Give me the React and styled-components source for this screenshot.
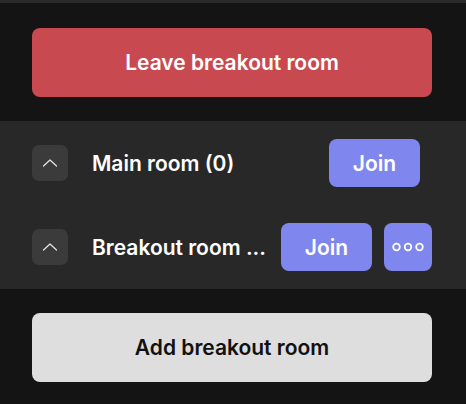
import React from 'react';
import styled, { createGlobalStyle } from 'styled-components';

const GlobalStyle = createGlobalStyle`
  html, body {
    margin: 0;
    padding: 0;
    background: #141414;
    font-family: Inter, "Noto Sans", sans-serif;
  }
`;

const Panel = styled.div`
  width: 466px;
  height: 404px;
  background: #141414;
  border-top: 3px solid #2b2b2b;
  box-sizing: border-box;
  display: flex;
  flex-direction: column;
`;

const Section = styled.div`
  padding: ${(props) => props.pad};
  display: flex;
  flex-direction: column;
`;

const WideButton = styled.button`
  width: 400px;
  height: 69px;
  border: none;
  border-radius: 8px;
  background: ${(props) => (props.variant === 'danger' ? '#c84a50' : '#dedede')};
  color: ${(props) => (props.variant === 'danger' ? '#ffffff' : '#111111')};
  font-family: inherit;
  font-size: 21px;
  font-weight: 600;
  cursor: pointer;
`;

const RoomList = styled.div`
  background: #282828;
  display: flex;
  flex-direction: column;
`;

const Row = styled.div`
  height: 84px;
  display: flex;
  align-items: center;
  padding: 0 34px 0 32px;
`;

const Toggle = styled.button`
  width: 36px;
  height: 36px;
  flex: none;
  border: none;
  border-radius: 7px;
  background: #3b3b3b;
  display: flex;
  align-items: center;
  justify-content: center;
  padding: 0;
  margin-right: 24px;
`;

const Name = styled.div`
  flex: 1;
  min-width: 0;
  color: #ffffff;
  font-size: 21px;
  font-weight: 600;
  white-space: nowrap;
  padding-right: 12px;
`;

const Actions = styled.div`
  display: flex;
  gap: 12px;
  flex: none;
  margin-right: ${(props) => props.inset || 0}px;
`;

const ActionButton = styled.button`
  height: 48px;
  width: ${(props) => (props.square ? '48px' : '91px')};
  border: none;
  border-radius: 8px;
  background: #7f86ee;
  color: #ffffff;
  font-family: inherit;
  font-size: 21px;
  font-weight: 600;
  display: flex;
  align-items: center;
  justify-content: center;
  padding: 0;
`;

const Chevron = () => (
  <svg width="16" height="10" viewBox="0 0 16 10" fill="none">
    <path d="M1.5 8 L8 2 L14.5 8" stroke="#e6e6e6" strokeWidth="1.2" strokeLinecap="round" strokeLinejoin="round" />
  </svg>
);

const MoreIcon = () => (
  <svg width="32" height="10" viewBox="0 0 32 10" fill="none">
    <circle cx="4.5" cy="5" r="3.3" stroke="#fff" strokeWidth="1.8" />
    <circle cx="16" cy="5" r="3.3" stroke="#fff" strokeWidth="1.8" />
    <circle cx="27.5" cy="5" r="3.3" stroke="#fff" strokeWidth="1.8" />
  </svg>
);

const rooms = [
  { name: 'Main room (0)', more: false },
  { name: 'Breakout room ...', more: true },
];

export default function App() {
  return (
    <>
      <GlobalStyle />
      <Panel>
        <Section pad="25px 34px 24px 32px">
          <WideButton variant="danger">Leave breakout room</WideButton>
        </Section>
        <RoomList>
          {rooms.map((room) => (
            <Row key={room.name}>
              <Toggle>
                <Chevron />
              </Toggle>
              <Name>{room.name}</Name>
              <Actions inset={room.more ? 0 : 12}>
                <ActionButton>Join</ActionButton>
                {room.more && (
                  <ActionButton square>
                    <MoreIcon />
                  </ActionButton>
                )}
              </Actions>
            </Row>
          ))}
        </RoomList>
        <Section pad="24px 34px 0 32px">
          <WideButton>Add breakout room</WideButton>
        </Section>
      </Panel>
    </>
  );
}
